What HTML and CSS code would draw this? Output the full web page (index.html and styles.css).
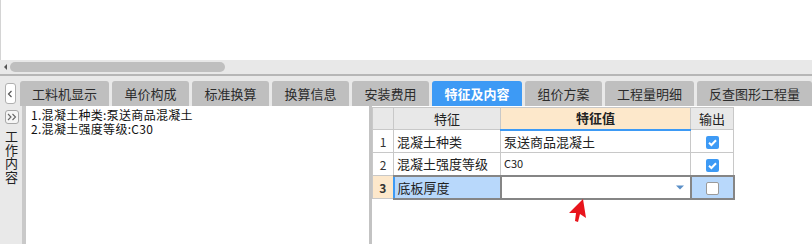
FILE: index.html
```html
<!DOCTYPE html>
<html lang="zh-CN">
<head>
<meta charset="utf-8">
<title>特征及内容</title>
<link rel="stylesheet" href="styles.css">
</head>
<body>
<div class="app">
  <div class="top"></div>
  <div class="hscroll">
    <span class="hs-arrow"></span>
    <span class="hs-thumb"></span>
  </div>
  <div class="tabbar">
    <button class="tab-prev" type="button">
      <svg width="6" height="8" viewBox="0 0 6 8"><polyline points="4.5,1 1.5,4 4.5,7" fill="none" stroke="#555" stroke-width="1.2"/></svg>
    </button>
    <div class="tabs">
      <div class="tab">工料机显示</div>
      <div class="tab">单价构成</div>
      <div class="tab">标准换算</div>
      <div class="tab">换算信息</div>
      <div class="tab">安装费用</div>
      <div class="tab active">特征及内容</div>
      <div class="tab">组价方案</div>
      <div class="tab">工程量明细</div>
      <div class="tab">反查图形工程量</div>
    </div>
  </div>
  <div class="main">
    <div class="side">
      <button class="side-btn" type="button">
        <svg width="10" height="8" viewBox="0 0 10 8"><polyline points="1,1 4,4 1,7" fill="none" stroke="#666" stroke-width="1.1"/><polyline points="5.5,1 8.5,4 5.5,7" fill="none" stroke="#666" stroke-width="1.1"/></svg>
      </button>
      <div class="side-label">工作内容</div>
    </div>
    <div class="content">
      <div class="line">1.混凝土种类:泵送商品混凝土</div>
      <div class="line">2.混凝土强度等级:C30</div>
    </div>
    <div class="splitter"></div>
    <div class="grid-area">
      <table class="grid">
        <colgroup>
          <col class="c-num"><col class="c-name"><col class="c-val"><col class="c-out">
        </colgroup>
        <thead>
          <tr>
            <th class="h-num"></th>
            <th class="h-name">特征</th>
            <th class="h-val">特征值</th>
            <th class="h-out">输出</th>
          </tr>
        </thead>
        <tbody>
          <tr>
            <td class="num">1</td>
            <td class="name">混凝土种类</td>
            <td class="val">泵送商品混凝土</td>
            <td class="out"><span class="check on"><svg width="13" height="13" viewBox="0 0 13 13"><rect width="13" height="13" rx="2" fill="#3d9af5"/><polyline points="3,6.8 5.4,9 10,4.2" fill="none" stroke="#fff" stroke-width="2"/></svg></span></td>
          </tr>
          <tr>
            <td class="num">2</td>
            <td class="name">混凝土强度等级</td>
            <td class="val small">C30</td>
            <td class="out"><span class="check on"><svg width="13" height="13" viewBox="0 0 13 13"><rect width="13" height="13" rx="2" fill="#3d9af5"/><polyline points="3,6.8 5.4,9 10,4.2" fill="none" stroke="#fff" stroke-width="2"/></svg></span></td>
          </tr>
          <tr class="sel">
            <td class="num">3</td>
            <td class="name">底板厚度</td>
            <td class="val"><span class="dd"><svg width="8" height="5" viewBox="0 0 8 5"><polygon points="0,0.5 8,0.5 4,4.5" fill="#5b8fc7"/></svg></span></td>
            <td class="out"><span class="check off"></span></td>
          </tr>
        </tbody>
      </table>
    </div>
  </div>
  <svg class="cursor" width="24" height="28" viewBox="0 0 24 28">
    <polygon points="17,2 20,21 14,17 12,25 9,24 10,16 3,16" fill="#e8141c"/>
  </svg>
</div>
</body>
</html>
```
FILE: styles.css
```css
* { box-sizing: border-box; }
html, body { margin: 0; padding: 0; }
body {
  width: 812px;
  height: 244px;
  overflow: hidden;
  background: #fff;
  font-family: "Noto Sans CJK SC", "Noto Sans", sans-serif;
  color: #333;
}
.app {
  position: relative;
  width: 812px;
  height: 244px;
  display: flex;
  flex-direction: column;
}
.top {
  height: 60px;
  border-left: 1px solid #d4d4d4;
  background: #fff;
}
.hscroll {
  height: 16px;
  background: #e8e8e8;
  border-bottom: 2px solid #b6b6b6;
  display: flex;
  align-items: center;
  padding-left: 4px;
  gap: 3px;
}
.hs-arrow {
  width: 0;
  height: 0;
  border-top: 3px solid transparent;
  border-bottom: 3px solid transparent;
  border-right: 3px solid #555;
}
.hs-thumb {
  width: 215px;
  height: 10px;
  border-radius: 5px;
  background: #bfbfbf;
}
.tabbar {
  height: 30px;
  background: #e9e9e9;
  display: flex;
  align-items: flex-end;
  padding-left: 5px;
}
.tab-prev {
  width: 12px;
  height: 21px;
  margin: 0 4px 2px 0;
  padding: 0;
  background: #fff;
  border: 1px solid #b0b0b0;
  border-radius: 3px;
  display: flex;
  align-items: center;
  justify-content: center;
}
.tabs {
  display: flex;
  gap: 3px;
}
.tab {
  height: 25px;
  min-width: 77px;
  padding: 0 12px;
  background: #bfbfbf;
  border-radius: 3px 3px 0 0;
  font-size: 13px;
  line-height: 25px;
  text-align: center;
  color: #2c2c2c;
  white-space: nowrap;
}
.tab.active {
  background: #3d9af5;
  color: #fff;
  font-weight: bold;
  min-width: 90px;
}
.main {
  flex: 1;
  display: flex;
  min-height: 0;
}
.side {
  width: 26px;
  background: #e9e9e9;
  border-right: 4px solid #c9c9c9;
  display: flex;
  flex-direction: column;
  align-items: flex-start;
  padding: 4px 0 0 5px;
}
.side-btn {
  width: 14px;
  height: 14px;
  padding: 0;
  background: #f6f6f6;
  border: 1px solid #a8a8a8;
  border-radius: 3px;
  display: flex;
  align-items: center;
  justify-content: center;
}
.side-label {
  margin-top: 6px;
  margin-left: -1px;
  writing-mode: vertical-rl;
  text-orientation: upright;
  font-size: 13px;
  line-height: 14px;
  letter-spacing: 0.5px;
  color: #222;
}
.content {
  width: 343px;
  background: #fff;
  padding: 2px 0 0 5px;
  font-size: 12px;
  line-height: 14px;
  letter-spacing: 0.3px;
  color: #111;
}
.line { white-space: nowrap; }
.splitter {
  width: 3px;
  background: #c3c3c3;
}
.grid-area {
  flex: 1;
  background: #fff;
  padding-top: 1px;
}
.grid {
  border-collapse: collapse;
  table-layout: fixed;
  width: 361px;
  font-size: 13px;
  color: #222;
}
.c-num { width: 21px; }
.c-name { width: 107px; }
.c-val { width: 190px; }
.c-out { width: 43px; }
.grid th, .grid td {
  border: 1px solid #c8c8c8;
  padding: 0;
  white-space: nowrap;
  overflow: hidden;
}
.grid th {
  height: 22px;
  background: #e8e8e8;
  font-weight: normal;
  text-align: center;
  line-height: 20px;
}
.grid th.h-val {
  background: #fde8cb;
  font-weight: bold;
  border-bottom: 2px solid #3d9af5;
}
.grid td {
  height: 23px;
  line-height: 21px;
}
.grid td.num {
  text-align: center;
  font-size: 12px;
  color: #333;
}
.grid td.name, .grid td.val {
  padding-left: 3px;
}
.grid td.small { font-size: 11px; }
.grid td.out { text-align: center; }
.check {
  display: inline-block;
  width: 13px;
  height: 13px;
  vertical-align: middle;
  line-height: 0;
}
.check.off {
  background: #fff;
  border: 1px solid #9a9a9a;
  border-radius: 2px;
}
.grid tr.sel td {
  border: 2px solid #858585;
}
.grid tr.sel td.num {
  border: 1px solid #c8c8c8;
  background: #fde8cb;
  font-weight: bold;
}
.grid tr.sel td.name {
  background: #b8d8fb;
  border-left: 2px solid #3d9af5;
}
.grid tr.sel td.out {
  background: #b8d8fb;
}
.grid td.val { position: relative; }
.dd {
  position: absolute;
  right: 6px;
  top: 8px;
  line-height: 0;
}
.cursor {
  position: absolute;
  left: 566px;
  top: 197px;
}
```
